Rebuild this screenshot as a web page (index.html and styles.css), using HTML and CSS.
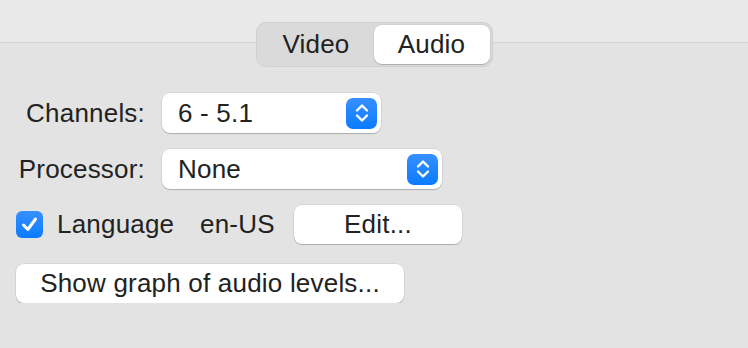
FILE: index.html
```html
<!DOCTYPE html>
<html lang="en">
<head>
    <meta charset="UTF-8">
    <title>Audio</title>
    <link rel="stylesheet" href="styles.css">
</head>
<body>

<div class="toolbar"></div>

<div class="tabs">
    <div class="segmented">
        <div class="segment">Video</div>
        <div class="segment active">Audio</div>
    </div>
</div>

<div class="form">
    <div class="row">
        <label class="label">Channels:</label>
        <div class="popup popup-short">
            <span class="popup-value">6 - 5.1</span>
            <span class="stepper">
                <svg width="14" height="20" viewBox="0 0 14 20"><path d="M2 7.5 L7 2.5 L12 7.5 M2 12.5 L7 17.5 L12 12.5" fill="none" stroke="#fff" stroke-width="2.4" stroke-linecap="round" stroke-linejoin="round"/></svg>
            </span>
        </div>
    </div>
    <div class="row">
        <label class="label">Processor:</label>
        <div class="popup popup-long">
            <span class="popup-value">None</span>
            <span class="stepper">
                <svg width="14" height="20" viewBox="0 0 14 20"><path d="M2 7.5 L7 2.5 L12 7.5 M2 12.5 L7 17.5 L12 12.5" fill="none" stroke="#fff" stroke-width="2.4" stroke-linecap="round" stroke-linejoin="round"/></svg>
            </span>
        </div>
    </div>
    <div class="row-lang">
        <span class="checkbox">
            <svg width="19" height="19" viewBox="0 0 19 19"><path d="M3.5 10 L7.8 14.5 L15.5 4" fill="none" stroke="#fff" stroke-width="3" stroke-linecap="round" stroke-linejoin="round"/></svg>
        </span>
        <span class="check-label">Language</span>
        <span class="lang-code">en-US</span>
        <button class="button edit">Edit...</button>
    </div>
    <div class="row-graph">
        <button class="button graph">Show graph of audio levels...</button>
    </div>
</div>

</body>
</html>
```

FILE: styles.css
```css
body {
    margin: 0;
    background-color: #e3e3e3;
    font-family: "Liberation Sans", Arial, sans-serif;
    font-size: 26px;
    letter-spacing: 0.2px;
    color: #222;
}
.toolbar {
    height: 42px;
    background-color: #e9e9e9;
    border-bottom: 1px solid #d4d4d4;
}
.tabs {
    display: flex;
    justify-content: center;
    margin-top: -21px;
}
.segmented {
    display: flex;
    padding: 2px;
    background-color: #dadada;
    border: 1px solid #d0d0d0;
    border-radius: 10px;
    height: 39px;
}
.segment {
    width: 115px;
    display: flex;
    align-items: center;
    justify-content: center;
    border-radius: 8px;
}
.segment.active {
    width: 116px;
    background-color: #fff;
    box-shadow: 0 1px 1px rgba(0, 0, 0, 0.18), 0 0 0 0.5px rgba(0, 0, 0, 0.08);
}
.form {
    padding: 26px 16px 0 16px;
}
.row {
    display: flex;
    align-items: center;
    margin-bottom: 16px;
}
.label {
    width: 129px;
    text-align: right;
    margin-right: 17px;
}
.popup {
    display: flex;
    align-items: center;
    justify-content: space-between;
    height: 40px;
    box-sizing: border-box;
    padding: 0 4px 0 16px;
    background-color: #fff;
    border-radius: 8px;
    box-shadow: 0 1px 1px rgba(0, 0, 0, 0.2), 0 0 0 0.5px rgba(0, 0, 0, 0.1);
}
.popup-short {
    width: 219px;
}
.popup-long {
    width: 280px;
}
.stepper {
    width: 31px;
    height: 31px;
    border-radius: 7px;
    background: linear-gradient(#3790ff, #0a7bff);
    display: flex;
    align-items: center;
    justify-content: center;
}
.row-lang {
    display: flex;
    align-items: center;
}
.checkbox {
    width: 27px;
    height: 27px;
    border-radius: 6px;
    background: linear-gradient(#3790ff, #0a7bff);
    display: flex;
    align-items: center;
    justify-content: center;
    margin-right: 14px;
}
.check-label {
    width: 143px;
}
.lang-code {
    width: 94px;
}
.button {
    font-family: inherit;
    font-size: 26px;
    letter-spacing: 0.2px;
    color: #222;
    background-color: #fff;
    border: none;
    border-radius: 8px;
    height: 39px;
    padding: 0;
    box-shadow: 0 1px 1px rgba(0, 0, 0, 0.2), 0 0 0 0.5px rgba(0, 0, 0, 0.1);
}
.edit {
    width: 168px;
}
.row-graph {
    margin-top: 20px;
}
.graph {
    width: 388px;
}
```
